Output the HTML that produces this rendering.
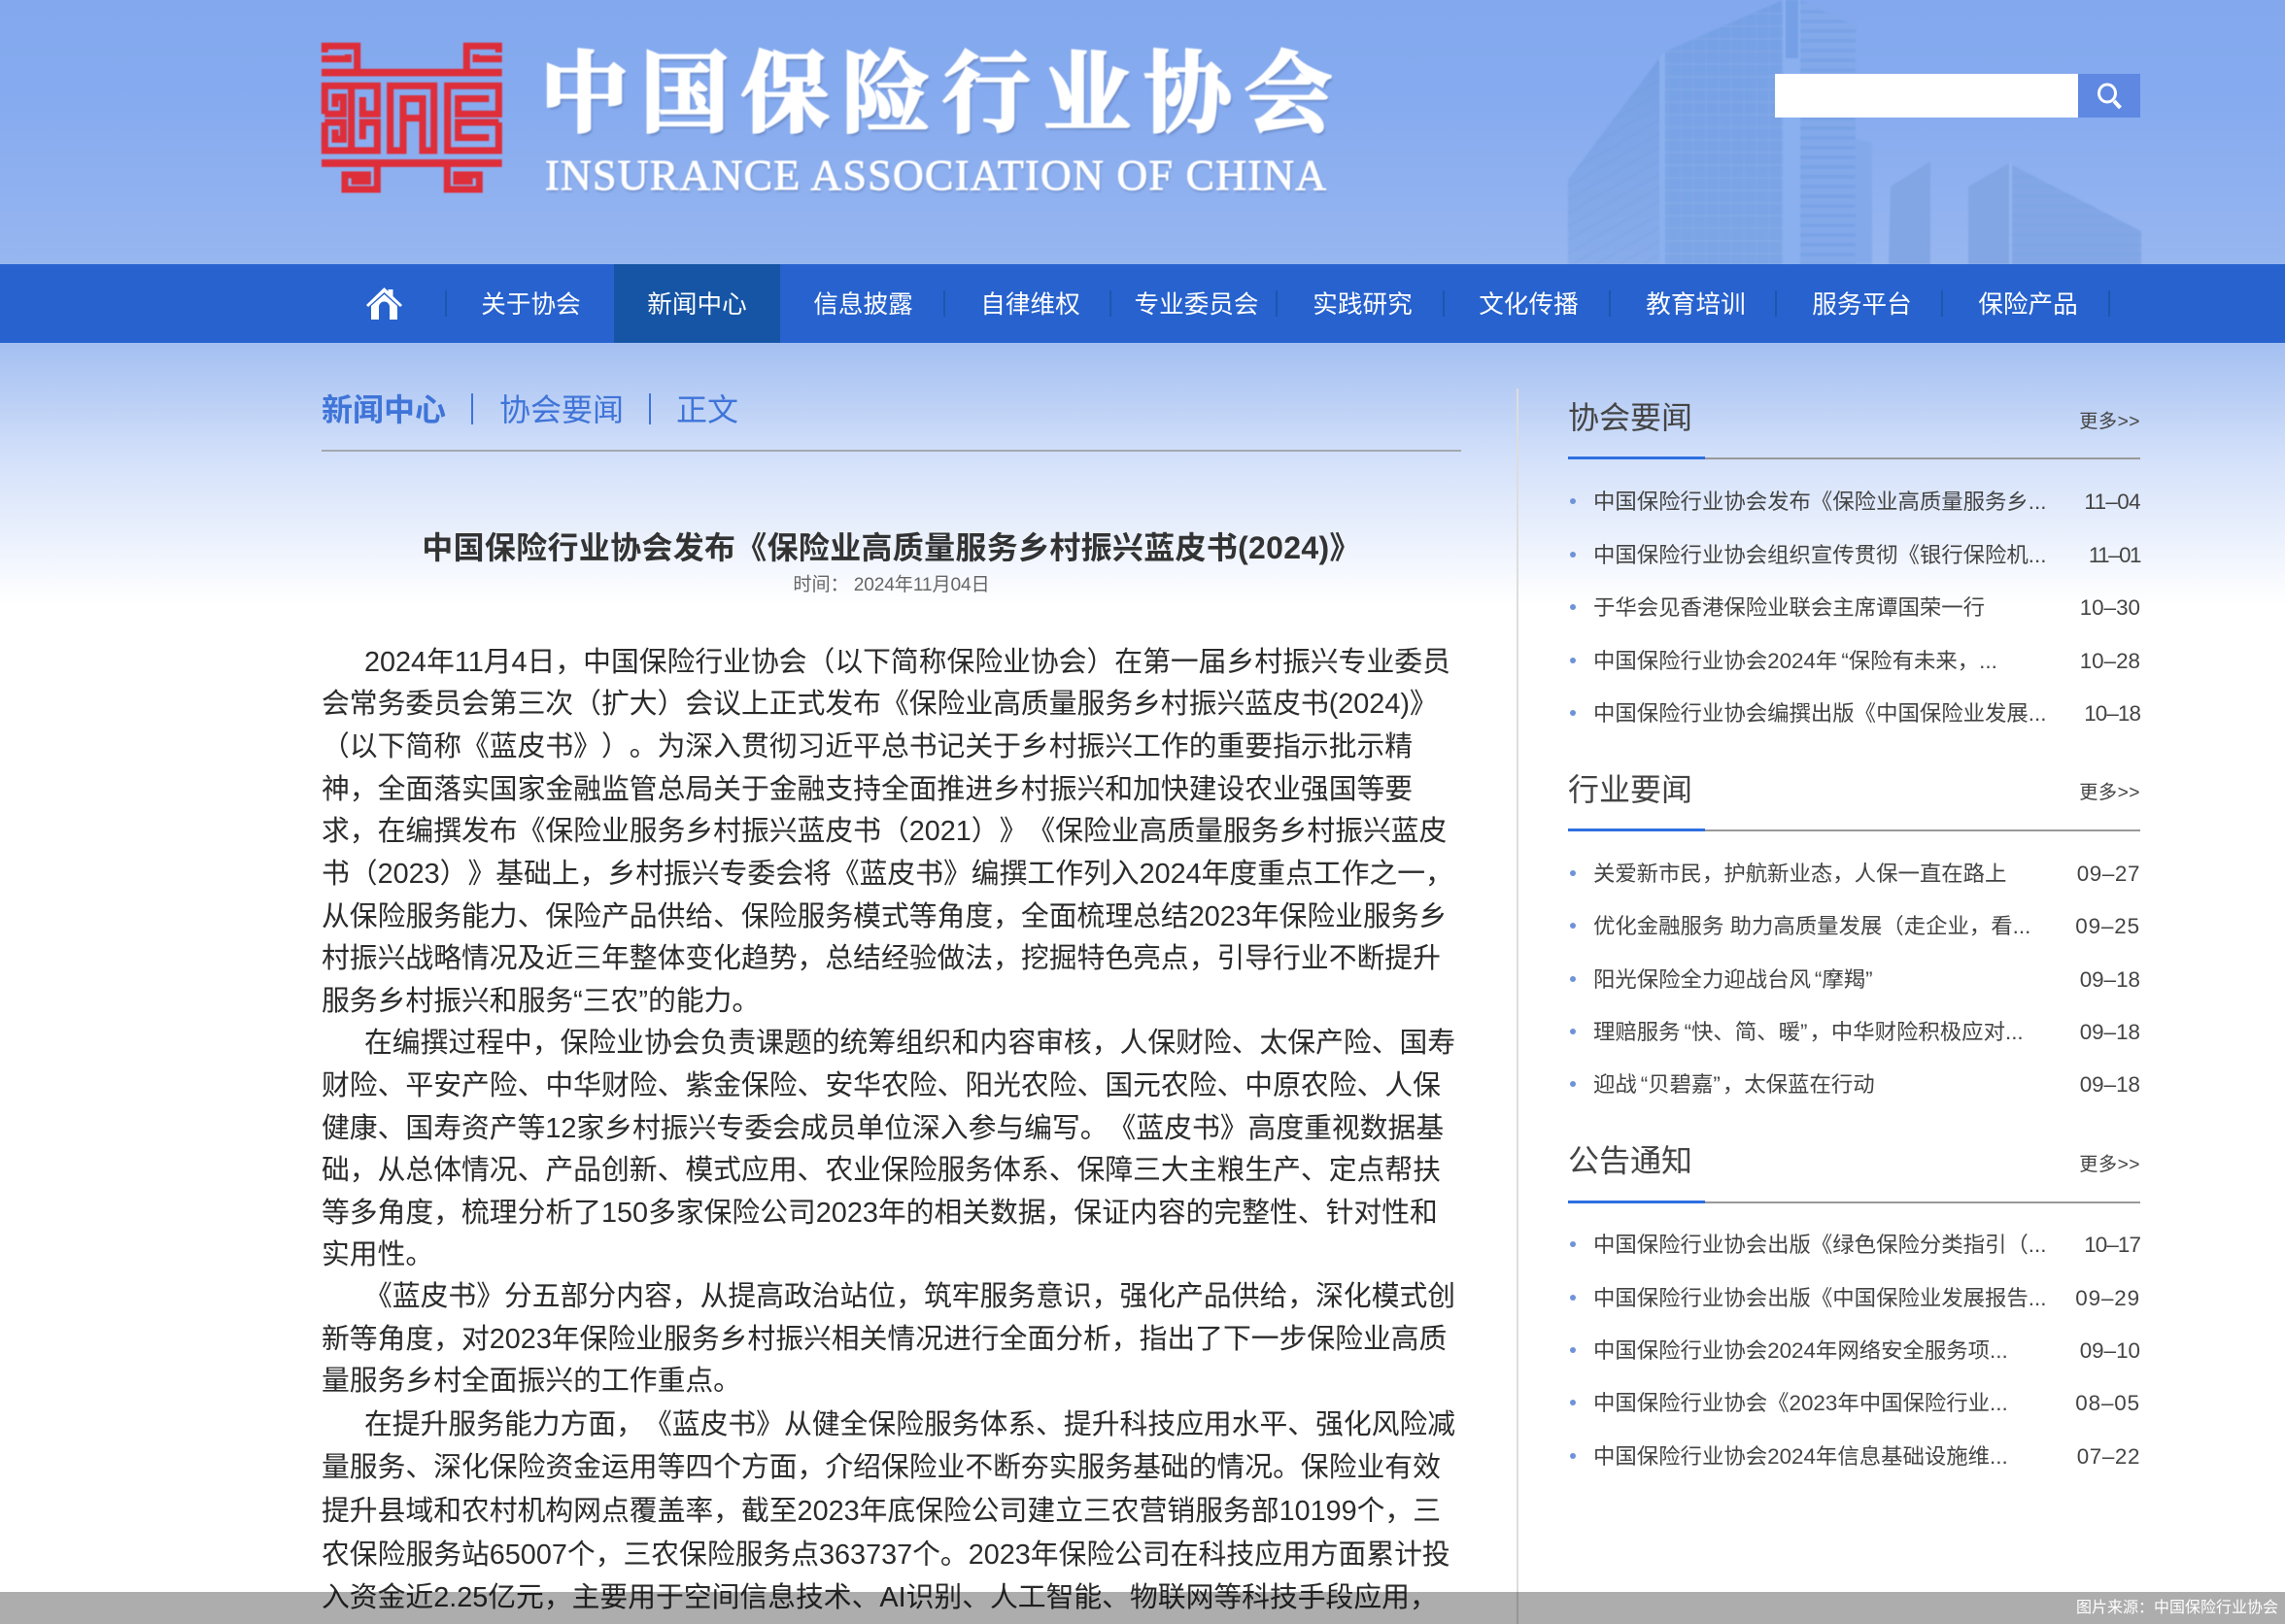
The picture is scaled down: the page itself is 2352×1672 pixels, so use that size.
<!DOCTYPE html>
<html lang="zh-CN"><head><meta charset="utf-8"><title>中国保险行业协会</title>
<style>
*{margin:0;padding:0;box-sizing:border-box}
html,body{width:2352px;height:1672px;overflow:hidden;background:#fff}
body{position:relative;font-family:"Liberation Sans","Noto Sans CJK SC",sans-serif;color:#333;text-spacing-trim:space-all}
.a{position:absolute;white-space:nowrap}
#bg{position:absolute;left:0;top:353px;width:2352px;height:270px;background:linear-gradient(#a3bff1,#d4e1fa 45%,#fff)}
#hd{position:absolute;left:0;top:0;width:2352px;height:272px;background:linear-gradient(#83a8ee,#86abef 40%,#97b6f0)}
#nav{position:absolute;left:0;top:272px;width:2352px;height:81px;background:#2762ce}
#act{position:absolute;left:632px;top:0;width:171px;height:81px;background:#1655a5}
.n{position:absolute;top:0;width:171px;height:81px;line-height:84px;text-align:center;color:#fff;font-size:25.6px}
.s{position:absolute;top:27px;width:2px;height:27px;background:#1a58ad}
.l{position:absolute;left:331px;height:44px;line-height:44px;margin-top:1.5px;font-size:28.8px;white-space:nowrap;color:#2b2b2b}
.h{position:absolute;left:1614px;font-size:32px;line-height:44px;color:#444}
.m{position:absolute;right:149px;font-size:19.2px;line-height:24px;margin-top:3px;color:#444;letter-spacing:.5px}
.r1{position:absolute;left:1614px;width:589px;height:2px;background:#999}
.r2{position:absolute;left:1614px;width:141px;height:3px;background:#2e6fe0}
.t{position:absolute;left:1640px;height:32px;line-height:32px;margin-top:1px;font-size:22.4px;color:#444;white-space:nowrap}
.d{position:absolute;right:149px;height:32px;line-height:32px;margin-top:1px;font-size:22.4px;color:#444;white-space:nowrap}
.b{position:absolute;left:1616px;width:6px;height:6px;border-radius:50%;background:#6f93d8}
.q{padding-left:4px}.p{padding-right:2px}
</style></head><body>
<div id="hd"></div>
<svg class="a" style="left:1500px;top:0;filter:blur(.7px)" width="720" height="272" viewBox="1500 0 720 272">
<defs>
<pattern id="st" width="13" height="13" patternUnits="userSpaceOnUse"><rect width="13" height="2" fill="#fff" fill-opacity=".05"/><rect width="2" height="13" fill="#fff" fill-opacity=".03"/></pattern>
<pattern id="sl" width="10" height="10" patternUnits="userSpaceOnUse"><rect width="10" height="4" fill="#6f9ce2" fill-opacity=".45"/></pattern>
<pattern id="ls" width="10" height="12" patternUnits="userSpaceOnUse" patternTransform="rotate(-30)"><rect width="10" height="2" fill="#6f98dc" fill-opacity=".18"/></pattern>
<linearGradient id="g1" x1="0" y1="0" x2="0" y2="1"><stop offset="0" stop-color="#76a0e4"/><stop offset="1" stop-color="#88acea"/></linearGradient>
<linearGradient id="g2" x1="0" y1="0" x2="0" y2="1"><stop offset="0" stop-color="#76a0e6"/><stop offset="1" stop-color="#7ca5e6"/></linearGradient>
</defs>
<polygon points="1614,185 1708,60 1708,272 1614,272" fill="url(#g1)"/>
<polygon points="1614,185 1708,60 1708,272 1614,272" fill="url(#ls)"/>
<polygon points="1708,60 1714,53 1714,272 1708,272" fill="#8bb0ee"/>
<polygon points="1714,53 1835,0 1835,272 1714,272" fill="url(#g2)"/>
<rect x="1714" y="0" width="121" height="272" fill="url(#st)" clip-path="polygon(0 53px,121px 0,121px 272px,0 272px)"/>
<rect x="1835" y="0" width="18" height="272" fill="#8ab0f0"/>
<rect x="1838" y="0" width="13" height="60" fill="#76a0e6"/>
<polygon points="1853,0 1910,27 1910,143 1927,147 1927,272 1853,272" fill="#83a9ea"/>
<polygon points="1853,0 1910,27 1910,272 1853,272" fill="url(#sl)"/>
<polygon points="1946,192 1987,166 1987,272 1944,272" fill="#82a6e4"/>
<polygon points="2026,192 2068,168 2068,272 2026,272" fill="#82a6e4"/>
<rect x="2068" y="168" width="3" height="104" fill="#94b5ef"/>
<polygon points="2071,170 2204,238 2204,272 2071,272" fill="#83a7e6"/>
<polygon points="2071,170 2204,238 2204,272 2071,272" fill="url(#sl)" fill-opacity=".4"/>
</svg>
<svg class="a" style="left:320px;top:30px;filter:blur(.6px)" width="210" height="180" viewBox="0 0 630 540" fill="none" stroke="#dd2e3a" stroke-width="21" stroke-linejoin="miter">
<path d="M33 134H590" stroke-width="23"/><path d="M33 414H590" stroke-width="23"/>
<path d="M43 72V52H143V125M33 92H115V78"/>
<path d="M580 72V52H481V125M590 92H510V78"/>
<path d="M205 420V495H105V450H175V470H125"/>
<path d="M421 420V495H520V450H450V470H500"/>
<path d="M125 175V375"/>
<path d="M43 262V175H205V262H160V210"/><path d="M43 262H100V210H75V240"/>
<path d="M43 288V375H205V288H160V340"/><path d="M43 288H100V340H75V310"/>
<path d="M245 385V175H380V385"/><path d="M285 215H345V275H285Z"/><path d="M285 275V375H235M345 275V375H390"/>
<path d="M422 385V175H580V262H455V215H550"/><path d="M580 288H455V335H550"/><path d="M422 375H580V288"/>
</svg>
<div class="a" style="left:556px;top:35px;font:700 91px/110px 'Noto Serif CJK SC','Liberation Serif',serif;letter-spacing:12.5px;color:#fff;-webkit-text-stroke:2.5px #fff;text-shadow:2px 3px 2px #6a88c4;filter:blur(.5px)">中国保险行业协会</div>
<div class="a" style="left:561px;top:155px;font:44px/52px 'Liberation Serif',serif;color:#fff;-webkit-text-stroke:.9px #fff;text-shadow:1px 2px 2px #6a88c4;letter-spacing:1.3px;filter:blur(.4px)">INSURANCE ASSOCIATION OF CHINA</div>
<div class="a" style="left:1827px;top:76px;width:312px;height:45px;background:#fff"></div>
<div class="a" style="left:2139px;top:76px;width:64px;height:45px;background:#5f88e2"></div>
<svg class="a" style="left:2155px;top:84px" width="32" height="30" viewBox="0 0 32 30" fill="none" stroke="#fff"><ellipse cx="14" cy="12" rx="8.500" ry="9" stroke-width="3"/><path d="M21 20l6.500 7" stroke-width="4"/></svg>
<div id="nav"><div id="act"></div>
<svg class="a" style="left:377px;top:24px" width="37" height="33" viewBox="0 0 37 33" fill="#fff"><path d="M18.500 0l4 4V2h5v7l9.500 9-2 2-16.500-15L2 20l-2-2z"/><path d="M5 19L18.500 7 32 19V33H24V20a5.500 5.500 0 0 0-11 0V33H5z"/></svg>
<div class="s" style="left:458px"></div><div class="s" style="left:971px"></div><div class="s" style="left:1142px"></div><div class="s" style="left:1313px"></div><div class="s" style="left:1485px"></div><div class="s" style="left:1656px"></div><div class="s" style="left:1827px"></div><div class="s" style="left:1998px"></div><div class="s" style="left:2170px"></div>
<div class="n" style="left:461px">关于协会</div><div class="n" style="left:632px">新闻中心</div><div class="n" style="left:803px">信息披露</div><div class="n" style="left:975px">自律维权</div><div class="n" style="left:1146px">专业委员会</div><div class="n" style="left:1317px">实践研究</div><div class="n" style="left:1488px">文化传播</div><div class="n" style="left:1660px">教育培训</div><div class="n" style="left:1831px">服务平台</div><div class="n" style="left:2002px">保险产品</div>
</div>
<div id="bg"></div>
<div class="a" style="left:331px;top:400px;font-size:32px;line-height:44px;font-weight:700;color:#3f74d8">新闻中心</div>
<div class="a" style="left:485px;top:405px;width:2px;height:32px;background:#3f74d8"></div>
<div class="a" style="left:514px;top:400px;font-size:32px;line-height:44px;color:#3f74d8">协会要闻</div>
<div class="a" style="left:668px;top:405px;width:2px;height:32px;background:#3f74d8"></div>
<div class="a" style="left:696px;top:400px;font-size:32px;line-height:44px;color:#3f74d8">正文</div>
<div class="a" style="left:331px;top:463px;width:1173px;height:2px;background:#a5a8b0"></div>
<div class="a" style="left:1561px;top:400px;width:2px;height:1272px;background:#ddd"></div>
<div class="a" style="left:331px;width:1173px;top:542px;text-align:center;font-size:32px;line-height:44px;font-weight:700;color:#333;letter-spacing:.3px">中国保险行业协会发布《保险业高质量服务乡村振兴蓝皮书(2024)》</div>
<div class="a" style="left:331px;width:1173px;top:591px;text-align:center;font-size:19.2px;line-height:24px;color:#666;letter-spacing:-.15px">时间： 2024年11月04日</div>
<div class="l" style="top:658px;left:375px">2024年11月4日，中国保险行业协会（以下简称保险业协会）在第一届乡村振兴专业委员</div>
<div class="l" style="top:701px">会常务委员会第三次（扩大）会议上正式发布《保险业高质量服务乡村振兴蓝皮书(2024)》</div>
<div class="l" style="top:745px">（以下简称《蓝皮书》）。为深入贯彻习近平总书记关于乡村振兴工作的重要指示批示精</div>
<div class="l" style="top:789px">神，全面落实国家金融监管总局关于金融支持全面推进乡村振兴和加快建设农业强国等要</div>
<div class="l" style="top:832px">求，在编撰发布《保险业服务乡村振兴蓝皮书（2021）》《保险业高质量服务乡村振兴蓝皮</div>
<div class="l" style="top:876px">书（2023）》基础上，乡村振兴专委会将《蓝皮书》编撰工作列入2024年度重点工作之一，</div>
<div class="l" style="top:920px">从保险服务能力、保险产品供给、保险服务模式等角度，全面梳理总结2023年保险业服务乡</div>
<div class="l" style="top:963px">村振兴战略情况及近三年整体变化趋势，总结经验做法，挖掘特色亮点，引导行业不断提升</div>
<div class="l" style="top:1007px">服务乡村振兴和服务“三农”的能力。</div>
<div class="l" style="top:1050px;left:375px">在编撰过程中，保险业协会负责课题的统筹组织和内容审核，人保财险、太保产险、国寿</div>
<div class="l" style="top:1094px">财险、平安产险、中华财险、紫金保险、安华农险、阳光农险、国元农险、中原农险、人保</div>
<div class="l" style="top:1138px">健康、国寿资产等12家乡村振兴专委会成员单位深入参与编写。《蓝皮书》高度重视数据基</div>
<div class="l" style="top:1181px">础，从总体情况、产品创新、模式应用、农业保险服务体系、保障三大主粮生产、定点帮扶</div>
<div class="l" style="top:1225px">等多角度，梳理分析了150多家保险公司2023年的相关数据，保证内容的完整性、针对性和</div>
<div class="l" style="top:1268px">实用性。</div>
<div class="l" style="top:1311px;left:375px">《蓝皮书》分五部分内容，从提高政治站位，筑牢服务意识，强化产品供给，深化模式创</div>
<div class="l" style="top:1355px">新等角度，对2023年保险业服务乡村振兴相关情况进行全面分析，指出了下一步保险业高质</div>
<div class="l" style="top:1398px">量服务乡村全面振兴的工作重点。</div>
<div class="l" style="top:1443px;left:375px">在提升服务能力方面，《蓝皮书》从健全保险服务体系、提升科技应用水平、强化风险减</div>
<div class="l" style="top:1487px">量服务、深化保险资金运用等四个方面，介绍保险业不断夯实服务基础的情况。保险业有效</div>
<div class="l" style="top:1532px">提升县域和农村机构网点覆盖率，截至2023年底保险公司建立三农营销服务部10199个，三</div>
<div class="l" style="top:1577px">农保险服务站65007个，三农保险服务点363737个。2023年保险公司在科技应用方面累计投</div>
<div class="l" style="top:1621px">入资金近2.25亿元，主要用于空间信息技术、AI识别、人工智能、物联网等科技手段应用，</div>

<div class="h" style="top:408px">协会要闻</div><div class="m" style="top:420px">更多&gt;&gt;</div>
<div class="r1" style="top:471px"></div><div class="r2" style="top:470px"></div>
<div class="b" style="top:513px"></div><div class="t" style="top:500px">中国保险行业协会发布《保险业高质量服务乡...</div><div class="d" style="top:500px;letter-spacing:-.6px">11–04</div>
<div class="b" style="top:568px"></div><div class="t" style="top:555px">中国保险行业协会组织宣传贯彻《银行保险机...</div><div class="d" style="top:555px;letter-spacing:-1.5px">11–01</div>
<div class="b" style="top:622px"></div><div class="t" style="top:609px">于华会见香港保险业联会主席谭国荣一行</div><div class="d" style="top:609px">10–30</div>
<div class="b" style="top:677px"></div><div class="t" style="top:664px">中国保险行业协会2024年<span class="q">“</span>保险有未来，...</div><div class="d" style="top:664px">10–28</div>
<div class="b" style="top:731px"></div><div class="t" style="top:718px">中国保险行业协会编撰出版《中国保险业发展...</div><div class="d" style="top:718px;letter-spacing:-.9px">10–18</div>

<div class="h" style="top:791px">行业要闻</div><div class="m" style="top:802px">更多&gt;&gt;</div>
<div class="r1" style="top:854px"></div><div class="r2" style="top:853px"></div>
<div class="b" style="top:896px"></div><div class="t" style="top:883px">关爱新市民，护航新业态，人保一直在路上</div><div class="d" style="top:883px;letter-spacing:.6px">09–27</div>
<div class="b" style="top:950px"></div><div class="t" style="top:937px">优化金融服务 助力高质量发展（走企业，看...</div><div class="d" style="top:937px;letter-spacing:.9px">09–25</div>
<div class="b" style="top:1005px"></div><div class="t" style="top:992px">阳光保险全力迎战台风<span class="q">“</span>摩羯<span class="p">”</span></div><div class="d" style="top:992px">09–18</div>
<div class="b" style="top:1059px"></div><div class="t" style="top:1046px">理赔服务<span class="q">“</span>快、简、暖<span class="p">”</span>，中华财险积极应对...</div><div class="d" style="top:1046px">09–18</div>
<div class="b" style="top:1113px"></div><div class="t" style="top:1100px">迎战<span class="q">“</span>贝碧嘉<span class="p">”</span>，太保蓝在行动</div><div class="d" style="top:1100px">09–18</div>

<div class="h" style="top:1173px">公告通知</div><div class="m" style="top:1185px">更多&gt;&gt;</div>
<div class="r1" style="top:1237px"></div><div class="r2" style="top:1236px"></div>
<div class="b" style="top:1278px"></div><div class="t" style="top:1265px">中国保险行业协会出版《绿色保险分类指引（...</div><div class="d" style="top:1265px;letter-spacing:-.9px">10–17</div>
<div class="b" style="top:1333px"></div><div class="t" style="top:1320px">中国保险行业协会出版《中国保险业发展报告...</div><div class="d" style="top:1320px;letter-spacing:.9px">09–29</div>
<div class="b" style="top:1387px"></div><div class="t" style="top:1374px">中国保险行业协会2024年网络安全服务项...</div><div class="d" style="top:1374px">09–10</div>
<div class="b" style="top:1441px"></div><div class="t" style="top:1428px">中国保险行业协会《2023年中国保险行业...</div><div class="d" style="top:1428px;letter-spacing:.9px">08–05</div>
<div class="b" style="top:1496px"></div><div class="t" style="top:1483px">中国保险行业协会2024年信息基础设施维...</div><div class="d" style="top:1483px;letter-spacing:.6px">07–22</div>

<div class="a" style="left:0;top:1639px;width:2352px;height:33px;background:rgba(0,0,0,.32)"></div>
<div class="a" style="right:7px;top:1639px;font-size:16px;line-height:33px;color:#fff">图片来源：中国保险行业协会</div>
</body></html>
